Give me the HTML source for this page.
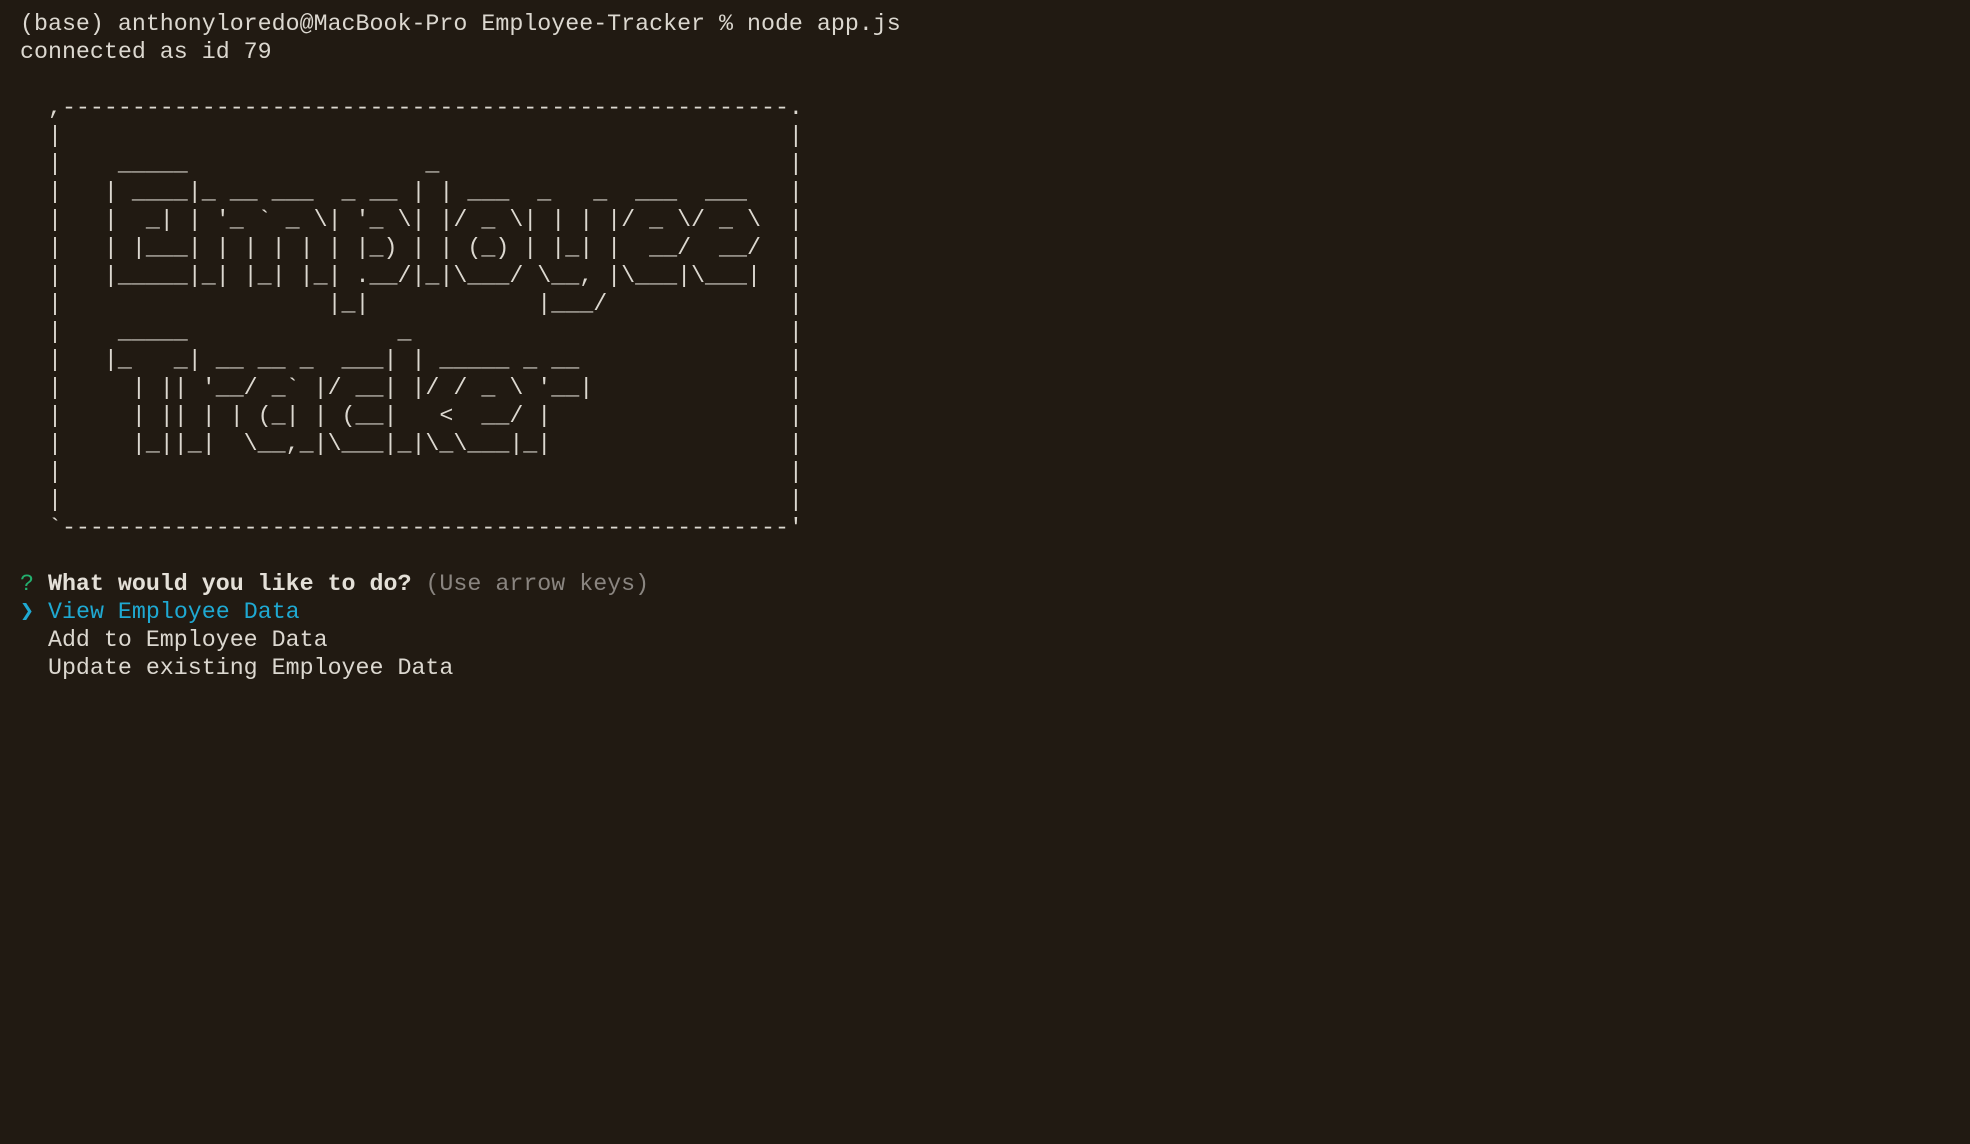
<!DOCTYPE html>
<html><head><meta charset="utf-8"><style>
html,body{margin:0;padding:0;background:#211a12;width:1970px;height:1144px;overflow:hidden}
pre{position:absolute;left:20px;top:10px;margin:0;font-family:"Liberation Mono","DejaVu Sans Mono",monospace;font-size:23.3px;line-height:28px;color:#dcd8d0;white-space:pre}
.rb{left:calc(20px + 55 * 0.6 * 23.3px)}
.g{color:#23b06e}.b{font-weight:bold;color:#e4e0d8}.d{color:#8a8580}.c{color:#1fa9d2}
</style></head><body>
<pre>(base) anthonyloredo@MacBook-Pro Employee-Tracker % node app.js
connected as id 79

  ,----------------------------------------------------.
  |
  |    _____                 _
  |   | ____|_ __ ___  _ __ | | ___  _   _  ___  ___
  |   |  _| | '_ ` _ \| '_ \| |/ _ \| | | |/ _ \/ _ \
  |   | |___| | | | | | |_) | | (_) | |_| |  __/  __/
  |   |_____|_| |_| |_| .__/|_|\___/ \__, |\___|\___|
  |                   |_|            |___/
  |    _____               _
  |   |_   _| __ __ _  ___| | _____ _ __
  |     | || '__/ _` |/ __| |/ / _ \ '__|
  |     | || | | (_| | (__|   &lt;  __/ |
  |     |_||_|  \__,_|\___|_|\_\___|_|
  |
  |
  `----------------------------------------------------'

<span class="g">?</span> <span class="b">What would you like to do?</span> <span class="d">(Use arrow keys)</span>
<span class="c">❯ View Employee Data</span>
  Add to Employee Data
  Update existing Employee Data</pre>
<pre class="rb" style="top:122px">|
|
|
|
|
|
|
|
|
|
|
|
|
|</pre>
</body></html>
